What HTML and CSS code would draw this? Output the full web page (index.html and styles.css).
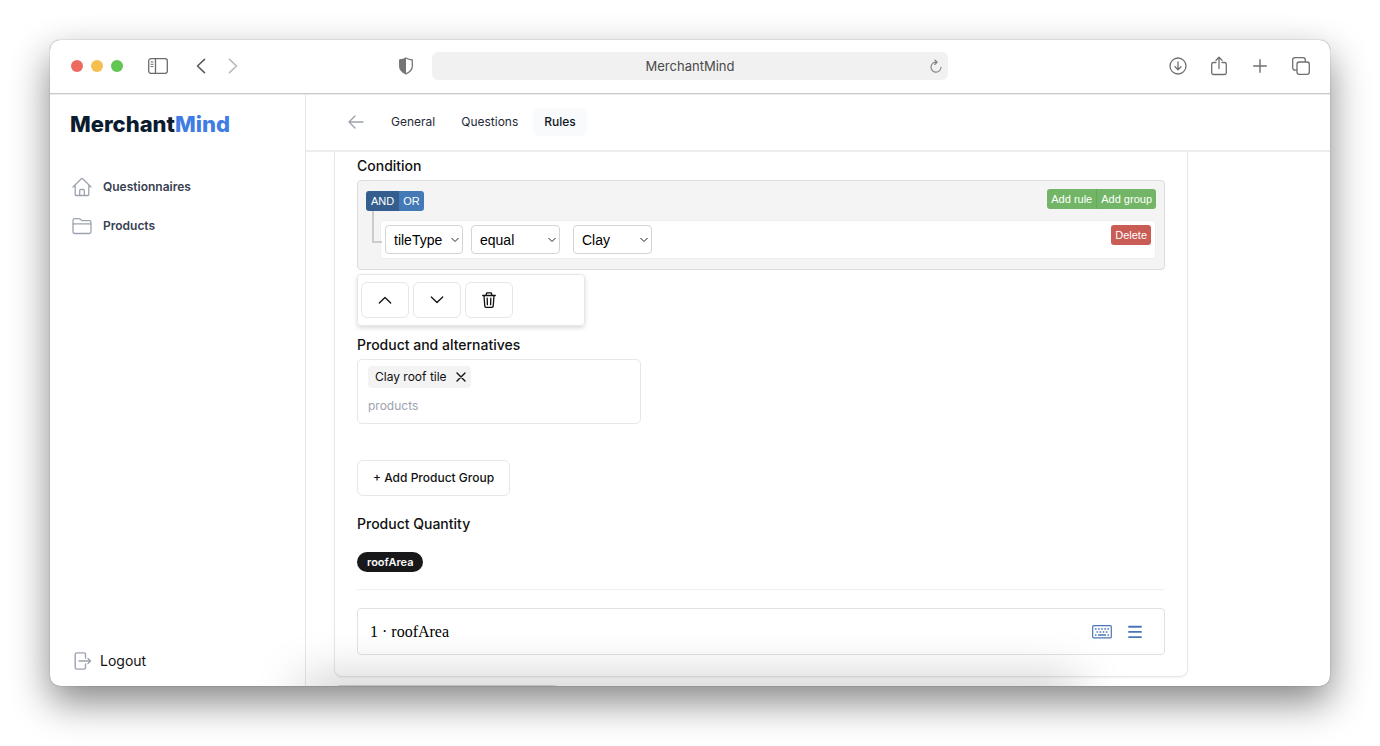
FILE: index.html
```html
<!DOCTYPE html>
<html lang="en">
<head>
<meta charset="utf-8">
<meta name="viewport" content="width=device-width, initial-scale=1">
<title>MerchantMind</title>
<link rel="stylesheet" href="styles.css">
</head>
<body>
<div class="window">
  <div class="toolbar">
    <div class="toolbar-left">
      <span class="lights"><i class="light red"></i><i class="light yellow"></i><i class="light green"></i></span>
      <button class="icon-btn" aria-label="Show sidebar"><svg width="20" height="16" viewBox="0 0 20 16" fill="none" stroke="#6b6b6b" stroke-width="1.3"><rect x=".7" y=".7" width="18.6" height="14.6" rx="2.2"/><path d="M7.5 1v14"/><path d="M2.6 4h2.8M2.6 6.3h2.8M2.6 8.6h2.8" stroke-width="1"/></svg></button>
      <span class="history">
        <button class="icon-btn" aria-label="Back"><svg width="10" height="16" viewBox="0 0 10 16" fill="none" stroke="#5c5c5c" stroke-width="1.6" stroke-linecap="round" stroke-linejoin="round"><path d="M8.5 1.3 1.5 8l7 6.7"/></svg></button>
        <button class="icon-btn" aria-label="Forward"><svg width="10" height="16" viewBox="0 0 10 16" fill="none" stroke="#b9b9b9" stroke-width="1.6" stroke-linecap="round" stroke-linejoin="round"><path d="m1.5 1.3 7 6.7-7 6.7"/></svg></button>
      </span>
      <button class="icon-btn shield" aria-label="Privacy report"><svg width="16" height="18" viewBox="0 0 16 18"><path d="M8 1c2 1.300 4 1.700 6.300 2v6.200c0 3.400-2.500 5.800-6.300 7.600-3.800-1.800-6.300-4.200-6.300-7.600V3C4 2.700 6 2.300 8 1z" fill="none" stroke="#757575" stroke-width="1.300" stroke-linejoin="round"/><path d="M8 1C6 2.300 4 2.700 1.700 3v6.200c0 3.400 2.500 5.800 6.300 7.600z" fill="#757575"/></svg></button>
    </div>
    <div class="address">
      <span>MerchantMind</span>
      <button class="icon-btn reload" aria-label="Reload"><svg width="12" height="14" viewBox="0 0 12 14" fill="none" stroke="#808080" stroke-width="1.100" stroke-linecap="round" stroke-linejoin="round"><path d="M6.800 3.200A5 5 0 1 0 11 8.200M4.800 1l2.400 2.200-2.400 2.300"/></svg></button>
    </div>
    <div class="toolbar-right">
      <button class="icon-btn" aria-label="Downloads"><svg width="18" height="18" viewBox="0 0 18 18" fill="none" stroke="#6f6f6f" stroke-width="1.300" stroke-linecap="round" stroke-linejoin="round"><circle cx="9" cy="9" r="8"/><path d="M9 5v7.500M6 9.700l3 3 3-3"/></svg></button>
      <button class="icon-btn" aria-label="Share"><svg width="18" height="20" viewBox="0 0 18 20" fill="none" stroke="#6f6f6f" stroke-width="1.300" stroke-linecap="round" stroke-linejoin="round"><path d="M6 6.500H3.500a1.800 1.800 0 0 0-1.800 1.800v8.400c0 1 .8 1.800 1.800 1.800h11c1 0 1.800-.8 1.800-1.800V8.300c0-1-.8-1.800-1.800-1.800H12M9 12.500V1.500M6 4.200l3-3 3 3"/></svg></button>
      <button class="icon-btn" aria-label="New tab"><svg width="18" height="18" viewBox="0 0 18 18" fill="none" stroke="#6f6f6f" stroke-width="1.400" stroke-linecap="round"><path d="M9 2.700v12.600M2.700 9h12.600"/></svg></button>
      <button class="icon-btn" aria-label="Tab overview"><svg width="18" height="18" viewBox="0 0 18 18" fill="none" stroke="#6f6f6f" stroke-width="1.300"><rect x="5" y="5" width="12.300" height="12.300" rx="2.200"/><path d="M5 13.200H2.900A2.200 2.200 0 0 1 .7 11V2.900C.7 1.700 1.700.7 2.900.7h8.200c1.200 0 2.200 1 2.200 2.200V5"/></svg></button>
    </div>
  </div>

  <div class="app">
    <aside class="sidebar">
      <a class="logo" href="#">Merchant<span>Mind</span></a>
      <nav class="side-nav" aria-label="Main">
        <a href="#"><svg width="20" height="20" viewBox="0 0 20 20" fill="none" stroke="#9ca3af" stroke-width="1.300" stroke-linecap="round" stroke-linejoin="round"><path d="M1 10 9.300 1.700a1 1 0 0 1 1.400 0L19 10M3.200 8v9.500c0 .6.400 1 1 1h11.600c.6 0 1-.4 1-1V8M7.700 18.500v-5c0-.6.400-1 1-1h2.600c.6 0 1 .4 1 1v5"/></svg>Questionnaires</a>
        <a href="#"><svg width="20" height="20" viewBox="0 0 20 20" fill="none" stroke="#9ca3af" stroke-width="1.300" stroke-linecap="round" stroke-linejoin="round"><path d="M1 8V4.500c0-1 .8-1.800 1.800-1.800h4.400c.5 0 .9.200 1.200.5l1.100 1c.3.300.8.500 1.200.5h6.500c1 0 1.800.8 1.800 1.800V15.700c0 1-.8 1.800-1.800 1.800H2.800c-1 0-1.800-.8-1.800-1.800zM1 9.200c0-.8.700-1.300 1.500-1.300h15c.8 0 1.500.5 1.500 1.300"/></svg>Products</a>
      </nav>
      <a class="logout" href="#"><svg width="18" height="18" viewBox="0 0 18 18" fill="none" stroke="#9ca3af" stroke-width="1.400" stroke-linecap="round" stroke-linejoin="round"><path d="M11.500 6V2.500c0-.9-.7-1.600-1.600-1.600H2.800c-.9 0-1.600.7-1.600 1.600v13c0 .9.700 1.600 1.600 1.600h7.100c.9 0 1.600-.7 1.600-1.600V12M5 9h11.500M14 6.500 16.500 9 14 11.500"/></svg>Logout</a>
    </aside>

    <main class="main">
      <header class="tabs">
        <a class="back" href="#" aria-label="Back"><svg width="16" height="14" viewBox="0 0 16 14" fill="none" stroke="#9ca3af" stroke-width="1.400" stroke-linecap="round" stroke-linejoin="round"><path d="M15 7H1M7 1 1 7l6 6"/></svg></a>
        <nav class="tab-list" aria-label="Questionnaire">
          <a href="#">General</a>
          <a href="#">Questions</a>
          <a class="active" href="#" aria-current="page">Rules</a>
        </nav>
      </header>

      <div class="scroll">
        <section class="card">
          <h2 class="label">Condition</h2>
          <div class="builder">
            <div class="builder-head">
              <div class="btn-group logic"><button class="mini and">AND</button><button class="mini or">OR</button></div>
              <div class="btn-group actions"><button class="mini add">Add rule</button><button class="mini add">Add group</button></div>
            </div>
            <div class="rule">
              <span class="select field"><select aria-label="Field"><option>tileType</option></select><svg width="8" height="6" viewBox="0 0 8 6"><path d="m.5 1 3.500 3.500L7.500 1"/></svg></span>
              <span class="select operator"><select aria-label="Operator"><option>equal</option></select><svg width="8" height="6" viewBox="0 0 8 6"><path d="m.5 1 3.500 3.500L7.500 1"/></svg></span>
              <span class="select value"><select aria-label="Value"><option>Clay</option></select><svg width="8" height="6" viewBox="0 0 8 6"><path d="m.5 1 3.500 3.500L7.500 1"/></svg></span>
              <button class="mini delete">Delete</button>
            </div>
          </div>

          <div class="order">
            <button class="outline square" aria-label="Move up"><svg width="14" height="8" viewBox="0 0 14 8"><path d="m1.300 7 5.700-5.500L12.700 7"/></svg></button>
            <button class="outline square" aria-label="Move down"><svg width="14" height="8" viewBox="0 0 14 8"><path d="m1.300 1 5.700 5.500L12.700 1"/></svg></button>
            <button class="outline square" aria-label="Remove"><svg width="14" height="16" viewBox="0 0 14 16"><path d="M.7 3.500h12.600M4 3.300l.8-2.500h4.400l.8 2.500M2 3.700l.8 10.500c.1.700.5 1.100 1.200 1.100h6c.7 0 1.100-.4 1.200-1.100L12 3.700M5.200 6.200l.2 6.500M8.800 6.200l-.2 6.500"/></svg></button>
          </div>

          <label class="label" for="products">Product and alternatives</label>
          <div class="multi">
            <span class="chip">Clay roof tile <button aria-label="Remove Clay roof tile"><svg width="10" height="10" viewBox="0 0 10 10"><path d="m1 1 8 8M9 1 1 9"/></svg></button></span>
            <input id="products" type="text" placeholder="products">
          </div>

          <button class="outline add-group">+ Add Product Group</button>

          <h2 class="label">Product Quantity</h2>
          <button class="pill">roofArea</button>
          <hr class="rule-line">
          <div class="formula">
            <span class="math">1 · roofArea</span>
            <button class="icon-btn" aria-label="Keyboard"><svg width="20" height="14" viewBox="0 0 20 14" fill="none" stroke="#4a76b5"><rect x=".7" y=".7" width="18.600" height="12.200" rx="1" stroke-width="1.200"/><path d="M3 4h14" stroke-width="1.600" stroke-dasharray="1.600 1.500"/><path d="M4.500 7h11" stroke-width="1.600" stroke-dasharray="1.600 1.500"/><path d="M3 10h1.500M6 10h8M15.500 10H17" stroke-width="1.400"/></svg></button>
            <button class="icon-btn" aria-label="Menu"><svg width="14" height="14" viewBox="0 0 14 14" stroke="#4a76b5" stroke-width="1.900" stroke-linecap="round"><path d="M1 1.700h12M1 6.900h12M1 12.100h12"/></svg></button>
          </div>
        </section>
        <div class="card next"></div>
      </div>
    </main>
  </div>
</div>
</body>
</html>
```

FILE: styles.css
```css
* { box-sizing: border-box; }

body {
  margin: 0;
  padding: 40px 50px 60px;
  background: #fff;
  color: #111;
  font: 12px/20px Inter, "Liberation Sans", sans-serif;
}

button, input, select { font: inherit; color: inherit; margin: 0; }
button { cursor: pointer; padding: 0; border: 0; background: none; }
a { color: inherit; text-decoration: none; }
svg { display: block; flex: none; }
h2 { margin: 0; }

.window {
  position: relative;
  display: flex;
  flex-direction: column;
  height: calc(100vh - 100px);
  overflow: hidden;
  border-radius: 10px;
  background: #fff;
  box-shadow: 0 0 1px rgba(0, 0, 0, .6), 0 16px 38px rgba(0, 0, 0, .48);
}

/* soft shade cast along the lower edge */
.window::after {
  content: "";
  position: absolute;
  left: 260px;
  right: 260px;
  top: 100%;
  height: 40px;
  box-shadow: 0 0 50px 8px rgba(0, 0, 0, .2);
  pointer-events: none;
}

/* browser toolbar */
.toolbar {
  flex: none;
  display: grid;
  grid-template-columns: 1fr 516px 1fr;
  gap: 16px;
  align-items: center;
  height: 54px;
  padding: 0 20px 1px;
  border-bottom: 1px solid #c9c9c9;
  box-shadow: 0 1px 0 #ececec;
}
.icon-btn { display: flex; align-items: center; justify-content: center; }
.toolbar-left { display: flex; align-items: center; }
.lights { display: flex; gap: 8px; margin: 0 25px 0 1px; }
.light { width: 12px; height: 12px; border-radius: 50%; }
.red { background: #ed6a5f; }
.yellow { background: #f5bf4f; }
.green { background: #62c554; }
.history { display: flex; gap: 22px; margin-left: 28px; }
.shield { margin: 0 2px 0 auto; }
.address {
  position: relative;
  height: 28px;
  border-radius: 6px;
  background: #f1f1f1;
  color: #4a4a4a;
  font-size: 13px;
  line-height: 28px;
  text-align: center;
}
.reload { position: absolute; right: 6px; top: 7px; }
.toolbar-right { display: flex; justify-content: flex-end; gap: 23px; }

/* app */
.app { flex: 1; min-height: 0; display: flex; }
.sidebar {
  flex: none;
  display: flex;
  flex-direction: column;
  width: 256px;
  padding: 14px 20px 15px;
  border-right: 1px solid #e5e7eb;
}
.logo { color: #0b1b30; font-size: 22px; line-height: 32px; font-weight: 800; }
.logo span { color: #3f7ce4; }
.side-nav { display: grid; gap: 19px; margin: 37px 2px 0; }
.side-nav a {
  display: flex;
  align-items: center;
  gap: 11px;
  color: #374151;
  font-weight: 600;
}
.logout {
  display: flex;
  align-items: center;
  gap: 8px;
  margin: auto 4px 0;
  font-size: 14px;
}

.main { flex: 1; min-width: 0; display: flex; flex-direction: column; }
.tabs {
  flex: none;
  display: flex;
  align-items: center;
  gap: 16px;
  height: 58px;
  padding: 0 42px;
  border-bottom: 2px solid #ededf0;
}
.tab-list { display: flex; gap: 4px; }
.tab-list a { padding: 4px 11px; border-radius: 6px; color: #1f2937; }
.tab-list .active { background: #f9fafb; color: #111827; font-weight: 500; }

.scroll { flex: 1; min-height: 0; overflow: hidden; padding: 0 142px 0 28px; }
.card {
  padding: 4px 22px 21px;
  border: 1px solid #e5e7eb;
  border-top: 0;
  border-radius: 0 0 8px 8px;
  box-shadow: 0 1px 2px rgba(0, 0, 0, .05);
}
.card.next {
  width: 222px;
  margin: 8px 2px 0;
  border: 1px solid #d9d9d9;
  border-radius: 4px;
}
.label { display: block; font-size: 14px; line-height: 20px; font-weight: 500; }

/* condition builder */
.builder {
  margin-top: 4px;
  padding: 8px 8px 10px;
  border: 1px solid #dcdcdc;
  border-radius: 4px;
  background: #f4f4f4;
}
.builder-head { display: flex; justify-content: space-between; height: 22px; }
.btn-group { display: flex; height: 20px; border-radius: 3px; overflow: hidden; }
.logic { align-self: flex-end; }
.mini {
  height: 20px;
  padding: 0 4px;
  color: #fff;
  font: 11px/20px "Liberation Sans", Arial, sans-serif;
}
.and { padding: 0 5px; background: #335e8e; }
.or { background: #4379b6; }
.add { background: #72b566; }
.add + .add { border-left: 1px solid #66a95b; }
.rule {
  position: relative;
  display: flex;
  margin: 9px 0 0 14px;
  padding: 4px;
  border: 1px solid #eee;
  border-radius: 4px;
  background: #fff;
}
.rule::before {
  content: "";
  position: absolute;
  left: -9px;
  top: -10px;
  width: 8px;
  height: 30px;
  border: solid #ccc;
  border-width: 0 0 2px 2px;
}
.select { position: relative; }
.select select {
  width: 100%;
  height: 29px;
  padding: 0 8px;
  border: 1px solid #d4d4d4;
  border-radius: 4px;
  background: #fff;
  color: #000;
  font: 14px/20px "Liberation Sans", Arial, sans-serif;
  appearance: none;
}
.select svg {
  position: absolute;
  right: 4px;
  top: 12px;
  fill: none;
  stroke: #222;
  pointer-events: none;
}
.field { width: 78px; }
.operator { width: 89px; margin-left: 8px; }
.value { width: 79px; margin-left: 13px; }
.delete { margin-left: auto; border-radius: 3px; background: #c95c54; }

.outline {
  border: 1px solid #e5e7eb;
  border-radius: 6px;
  background: #fff;
  font-weight: 500;
}
.order {
  display: flex;
  gap: 4px;
  width: 228px;
  margin: 4px 0 9px;
  padding: 7px 3px;
  border: 1px solid #e5e7eb;
  border-radius: 4px;
  box-shadow: 0 2px 4px rgba(0, 0, 0, .15);
}
.square { display: grid; place-items: center; width: 48px; height: 36px; }
.square svg { fill: none; stroke: #111; stroke-width: 1.3; stroke-linecap: round; stroke-linejoin: round; }

.multi {
  width: 284px;
  margin-top: 4px;
  padding: 6px 10px 7px;
  border: 1px solid #e5e7eb;
  border-radius: 5px;
}
.chip {
  display: inline-flex;
  align-items: center;
  gap: 9px;
  height: 22px;
  padding: 0 5px 0 7px;
  border-radius: 4px;
  background: #f3f3f4;
}
.chip svg { fill: none; stroke: #111; stroke-width: 1.4; stroke-linecap: round; }
.multi input { display: block; width: 100%; height: 20px; margin-top: 8px; padding: 0; border: 0; outline: 0; }
.multi input::placeholder { color: #9ca3af; opacity: 1; }

.add-group { height: 36px; margin: 36px 0 18px; padding: 0 15px; }
.pill {
  display: block;
  height: 20px;
  margin-top: 18px;
  padding: 0 10px;
  border-radius: 10px;
  background: #18181b;
  color: #fafafa;
  font-size: 11px;
  font-weight: 600;
}
.rule-line { margin: 17px 0 18px; border: 0; border-top: 1px solid #f1f1f2; }
.formula {
  display: flex;
  align-items: center;
  gap: 16px;
  height: 47px;
  padding: 0 22px 0 12px;
  border: 1px solid #e2e2e2;
  border-radius: 4px;
}
.math { margin-right: auto; font: 16px/20px "Liberation Serif", "Times New Roman", serif; color: #000; }
```
